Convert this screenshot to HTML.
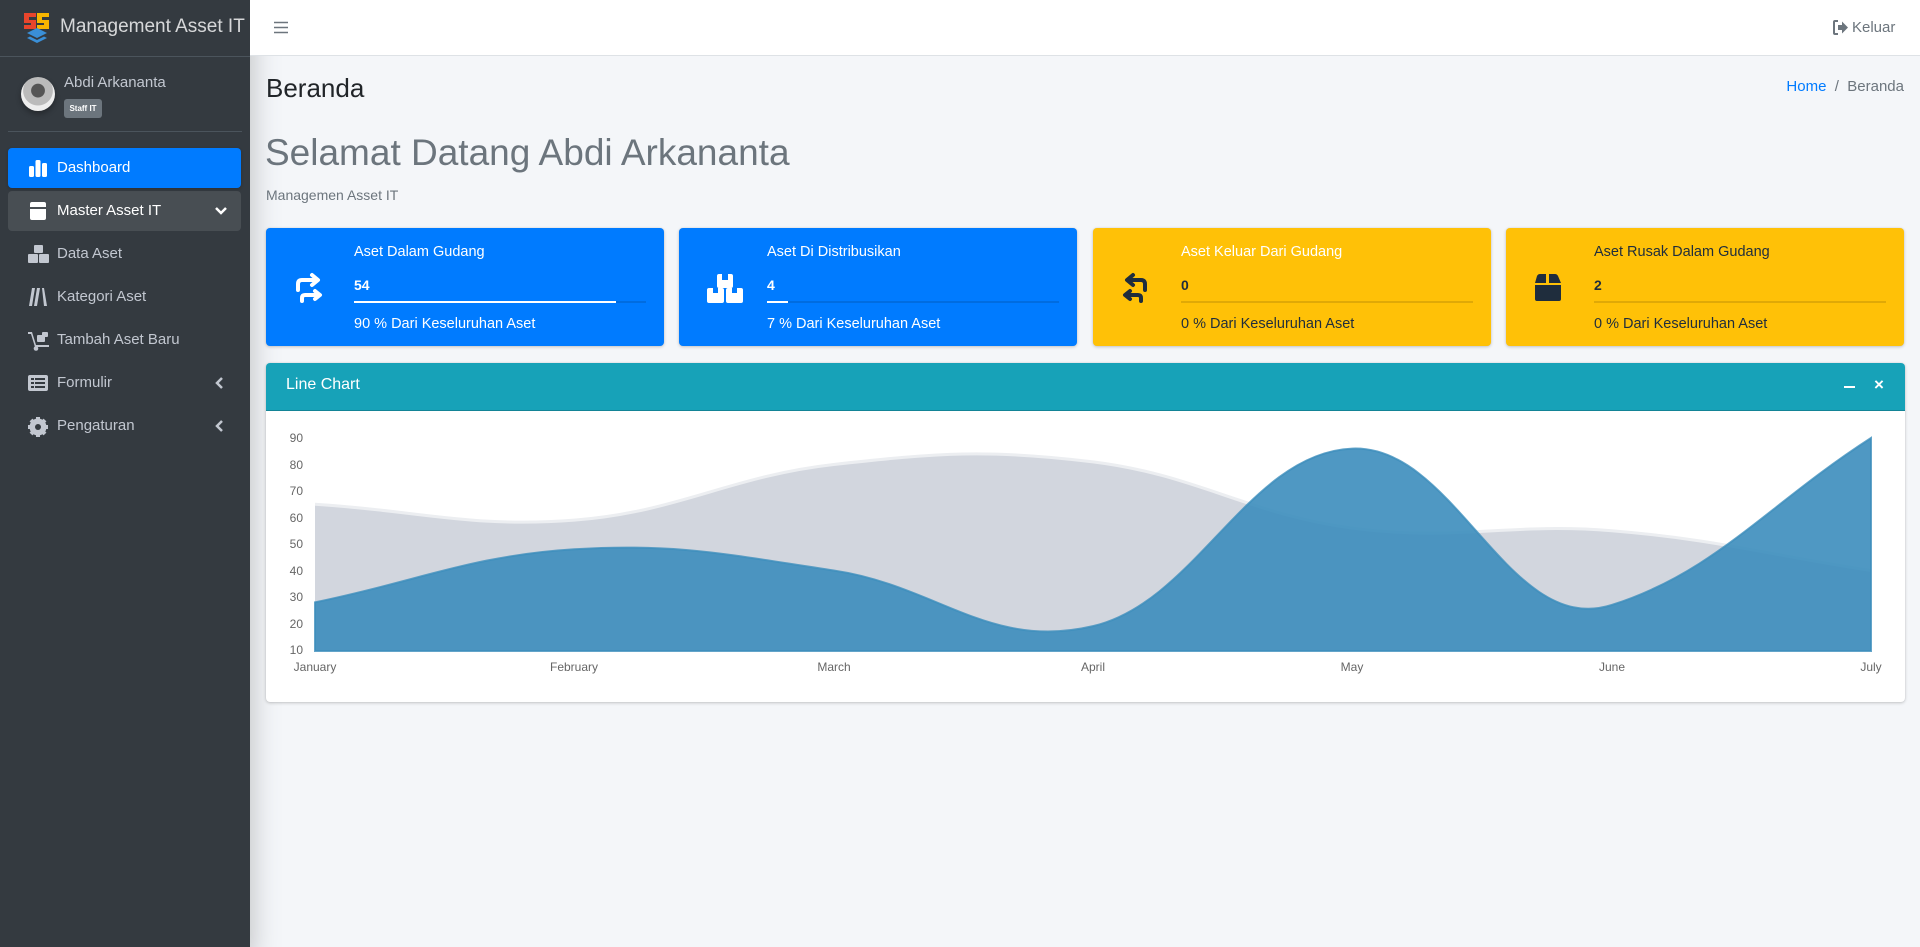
<!DOCTYPE html>
<html><head><meta charset="utf-8"><style>
*{box-sizing:border-box;margin:0;padding:0}
body{width:1920px;height:947px;overflow:hidden;background:#f4f6f9;font-family:"Liberation Sans",sans-serif;position:relative}
.a{position:absolute;white-space:nowrap}
#sb{left:0;top:0;width:250px;height:947px;background:#343a40;box-shadow:0 14px 28px rgba(0,0,0,.25)}
.nav{position:absolute;left:8px;width:233px;height:40px;border-radius:4px;color:#c2c7d0;font-size:15px;line-height:40px;padding-left:49px}
.nav svg{position:absolute;left:20px;top:11px}
.ib{position:absolute;top:228px;width:398px;height:118px;border-radius:4px;box-shadow:0 0 1px rgba(0,0,0,.125),0 1px 3px rgba(0,0,0,.2)}
.ib .t{position:absolute;left:88px;top:16px;font-size:14.5px}
.ib .n{position:absolute;left:88px;top:49px;font-size:14px;font-weight:bold}
.ib .p{position:absolute;left:88px;top:73px;width:292px;height:2px;background:rgba(0,0,0,.12)}
.ib .p i{display:block;height:2px}
.ib .d{position:absolute;left:88px;top:88px;font-size:14.5px}
.ib svg{position:absolute;left:28px;top:44px}
.yl{font-size:12px;color:#666;position:absolute;right:1617px;text-align:right}
.xl{font-size:12px;color:#666;position:absolute;top:660px;transform:translateX(-50%)}
</style></head><body>
<div id="sb" class="a">
 <svg class="a" style="left:21px;top:11px" width="30" height="32" viewBox="0 0 30 32"><path d="M3 2h12v4H8v3h7v9H3v-4h7v-2H3z" fill="#e8452c"/><path d="M16 2h12v4h-7v3h7v9H16v-4h7v-2h-7z" fill="#f7b500"/><path d="M6 22l10-5 10 5-10 5z" fill="#3a8fd8"/><path d="M6 27l10 5 10-5-3-1.5-7 3.5-7-3.5z" fill="#3a8fd8"/></svg>
 <div class="a" style="left:60px;top:16px;font-size:19px;color:rgba(255,255,255,.8);font-weight:300">Management Asset IT</div>
 <div class="a" style="left:0;top:56px;width:250px;height:1px;background:#4b545c"></div>
 <div class="a" style="left:21px;top:77px;width:34px;height:34px;border-radius:50%;background:radial-gradient(circle at 50% 40%,#555 0 25%,#bbb 27% 55%,#eee 57%);box-shadow:0 3px 6px rgba(0,0,0,.3)"></div>
 <div class="a" style="left:64px;top:74px;font-size:15px;color:#c2c7d0">Abdi Arkananta</div>
 <div class="a" style="left:64px;top:99px;width:38px;height:19px;background:#6c757d;border-radius:3px;color:#fff;font-size:8px;font-weight:bold;line-height:19px;text-align:center">Staff IT</div>
 <div class="a" style="left:8px;top:131px;width:234px;height:1px;background:#4b545c"></div>
 <div class="nav" style="top:148px;background:#007bff;color:#fff;box-shadow:0 1px 3px rgba(0,0,0,.2)"><svg width="20" height="18" viewBox="0 0 20 18" fill="#fff"><rect x="1" y="7" width="5" height="11" rx="1.5"/><rect x="7.5" y="1" width="5" height="17" rx="1.5"/><rect x="14" y="4" width="5" height="14" rx="1.5"/></svg>Dashboard</div>
 <div class="nav" style="top:191px;background:rgba(255,255,255,.1);color:#fff"><svg width="20" height="18" viewBox="0 0 20 18" fill="#fff"><path d="M2 2q0-2 2-2h12q2 0 2 2v3H2zM2 7h16v9q0 2-2 2H4q-2 0-2-2z"/></svg>Master Asset IT<svg style="left:206px;top:15px" width="14" height="10" viewBox="0 0 14 10"><path d="M2 2l5 5 5-5" stroke="#fff" stroke-width="2.5" fill="none"/></svg></div>
 <div class="nav" style="top:234px"><svg width="22" height="18" viewBox="0 0 22 18" fill="#c2c7d0"><rect x="6" y="0" width="9" height="8" rx="1"/><rect x="0" y="9" width="10" height="9" rx="1"/><rect x="11" y="9" width="10" height="9" rx="1"/></svg>Data Aset</div>
 <div class="nav" style="top:277px"><svg width="20" height="18" viewBox="0 0 20 18" fill="#c2c7d0"><path d="M4 0h3L4 18H1zM9 0h3L9 18H6zM14 0h2l3 18h-3z"/></svg>Kategori Aset</div>
 <div class="nav" style="top:320px"><svg width="22" height="20" viewBox="0 0 22 20" fill="#c2c7d0"><path d="M0 1h4l4 13h13v2H7L3 3H0z"/><circle cx="8" cy="17.5" r="2.3"/><rect x="9" y="4" width="8" height="7" rx="1"/><rect x="14" y="1" width="6" height="5" rx="1"/></svg>Tambah Aset Baru</div>
 <div class="nav" style="top:363px"><svg width="20" height="18" viewBox="0 0 20 18" fill="#c2c7d0"><path d="M2 1h16q2 0 2 2v12q0 2-2 2H2q-2 0-2-2V3q0-2 2-2z"/><g fill="#343a40"><rect x="3" y="4" width="3" height="2"/><rect x="3" y="8" width="3" height="2"/><rect x="3" y="12" width="3" height="2"/><rect x="7" y="4" width="10" height="2"/><rect x="7" y="8" width="10" height="2"/><rect x="7" y="12" width="10" height="2"/></g></svg>Formulir<svg style="left:207px;top:13px" width="10" height="14" viewBox="0 0 10 14"><path d="M7 2L2 7l5 5" stroke="#c2c7d0" stroke-width="2.5" fill="none"/></svg></div>
 <div class="nav" style="top:406px"><svg width="20" height="20" viewBox="0 0 20 20"><circle cx="10" cy="10" r="6" fill="none" stroke="#c2c7d0" stroke-width="5"/><g stroke="#c2c7d0" stroke-width="4"><path d="M10 0v20M0 10h20M3 3l14 14M17 3L3 17"/></g><circle cx="10" cy="10" r="3" fill="#343a40"/></svg>Pengaturan<svg style="left:207px;top:13px" width="10" height="14" viewBox="0 0 10 14"><path d="M7 2L2 7l5 5" stroke="#c2c7d0" stroke-width="2.5" fill="none"/></svg></div>
</div>

<div class="a" style="left:250px;top:0;width:1670px;height:56px;background:#fff;border-bottom:1px solid #dee2e6"></div>
<svg class="a" style="left:274px;top:21px" width="14" height="13" viewBox="0 0 14 13"><path d="M0 1.5h14M0 6.5h14M0 11.5h14" stroke="#6c757d" stroke-width="1.6"/></svg>
<svg class="a" style="left:1833px;top:20px" width="15" height="15" viewBox="0 0 15 15" fill="#6c757d"><path d="M0 2q0-2 2-2h3v2H2v11h3v2H2q-2 0-2-2z"/><path d="M5 5h4V1.5L15 7.5l-6 6V10H5z"/></svg>
<div class="a" style="left:1852px;top:19px;font-size:15px;color:#6c757d">Keluar</div>

<div class="a" style="left:266px;top:73px;font-size:26px;color:#212529">Beranda</div>
<div class="a" style="right:16px;top:78px;font-size:15px;color:#6c757d"><span style="color:#007bff">Home</span>&nbsp;&nbsp;/&nbsp;&nbsp;Beranda</div>
<div class="a" style="left:265px;top:132px;font-size:37px;color:#6c757d;font-weight:300">Selamat Datang Abdi Arkananta</div>
<div class="a" style="left:266px;top:187px;font-size:14px;color:#6c757d">Managemen Asset IT</div>

<div class="ib" style="left:266px;background:#007bff;color:#fff"><svg width="30" height="32" viewBox="0 0 30 32" fill="none" stroke="#fff" stroke-width="4" stroke-linecap="round"><path d="M4 18V12q0-4 4-4h14"/><path d="M18 3l6 5-6 5" stroke-linejoin="round"/><path d="M8 29v-3q0-3 3-3h14"/><path d="M21 19l5 4-5 4" stroke-linejoin="round"/></svg><div class="t">Aset Dalam Gudang</div><div class="n">54</div><div class="p"><i style="width:262px;background:#fff"></i></div><div class="d">90 % Dari Keseluruhan Aset</div></div>
<div class="ib" style="left:679px;background:#007bff;color:#fff"><svg width="36" height="32" viewBox="0 0 36 32" fill="#fff"><rect x="10" y="2" width="16" height="14" rx="2"/><rect x="0" y="16" width="17" height="15" rx="2"/><rect x="19" y="16" width="17" height="15" rx="2"/><g fill="#007bff"><rect x="15" y="2" width="6" height="6"/><rect x="6" y="16" width="5" height="5"/><rect x="25" y="16" width="5" height="5"/></g></svg><div class="t">Aset Di Distribusikan</div><div class="n">4</div><div class="p"><i style="width:21px;background:#fff"></i></div><div class="d">7 % Dari Keseluruhan Aset</div></div>
<div class="ib" style="left:1093px;background:#ffc107;color:#1f2d3d"><svg width="30" height="32" viewBox="0 0 30 32" fill="none" stroke="#1f2d3d" stroke-width="4" stroke-linecap="round"><path d="M24 18V12q0-4-4-4H8"/><path d="M12 3L6 8l6 5" stroke-linejoin="round"/><path d="M20 29v-3q0-3-3-3H5"/><path d="M9 19l-5 4 5 4" stroke-linejoin="round"/></svg><div class="t" style="color:#fff">Aset Keluar Dari Gudang</div><div class="n">0</div><div class="p"><i></i></div><div class="d">0 % Dari Keseluruhan Aset</div></div>
<div class="ib" style="left:1506px;background:#ffc107;color:#1f2d3d"><svg width="28" height="32" viewBox="0 0 28 32" fill="#1f2d3d"><path d="M1 11l2-7q1-2 3-2h6v9zM15 2h6q2 0 3 2l3 7H15zM1 13h26v14q0 2-2 2H3q-2 0-2-2z"/></svg><div class="t">Aset Rusak Dalam Gudang</div><div class="n">2</div><div class="p"><i></i></div><div class="d">0 % Dari Keseluruhan Aset</div></div>

<div class="a" style="left:266px;top:363px;width:1639px;height:339px;background:#fff;border-radius:4px;box-shadow:0 0 1px rgba(0,0,0,.125),0 1px 3px rgba(0,0,0,.2)"></div>
<div class="a" style="left:266px;top:363px;width:1639px;height:48px;background:#17a2b8;border-radius:4px 4px 0 0;border-bottom:1px solid #138496"></div>
<div class="a" style="left:286px;top:376px;font-size:16px;color:#fff">Line Chart</div>
<div class="a" style="left:1844px;top:386px;width:11px;height:2px;background:#fff"></div>
<div class="a" style="left:1874px;top:375px;font-size:17px;color:#fff;font-weight:bold">×</div>

<svg class="a" style="left:0;top:0" width="1920" height="947">
<path d="M315,504.25 C418.7,510.6 470.6,528.1 574.3,520.15 C678,512.2 730,476.2 833.7,464.5 C937.4,452.8 989.3,449.1 1093,461.85 C1196.7,474.6 1248.6,514.3 1352.3,528.1 C1456,541.9 1508,522.3 1611.7,530.75 C1715.4,539.2 1767.3,554.6 1871,570.5 L1871,651 L315,651 Z" fill="#d2d6de"/>
<path d="M315,504.25 C418.7,510.6 470.6,528.1 574.3,520.15 C678,512.2 730,476.2 833.7,464.5 C937.4,452.8 989.3,449.1 1093,461.85 C1196.7,474.6 1248.6,514.3 1352.3,528.1 C1456,541.9 1508,522.3 1611.7,530.75 C1715.4,539.2 1767.3,554.6 1871,570.5" fill="none" stroke="#eceef1" stroke-width="3"/>
<path d="M315,602.3 C418.7,581.1 470.6,555.7 574.3,549.3 C678,542.9 730,555.1 833.7,570.5 C937.4,585.9 989.3,650.5 1093,626.15 C1196.7,601.8 1248.6,452.8 1352.3,448.6 C1456,444.4 1508,637.9 1611.7,605 C1715.4,572.1 1767.3,504.8 1871,438 L1871,651 L315,651 Z" fill="rgb(60,141,188)" fill-opacity="0.9" stroke="rgb(60,141,188)" stroke-opacity="0.8" stroke-width="2"/>
</svg>
<div class="yl" style="top:431px">90</div><div class="yl" style="top:458px">80</div><div class="yl" style="top:484px">70</div><div class="yl" style="top:511px">60</div><div class="yl" style="top:537px">50</div><div class="yl" style="top:564px">40</div><div class="yl" style="top:590px">30</div><div class="yl" style="top:617px">20</div><div class="yl" style="top:643px">10</div>
<div class="xl" style="left:315px">January</div><div class="xl" style="left:574px">February</div><div class="xl" style="left:834px">March</div><div class="xl" style="left:1093px">April</div><div class="xl" style="left:1352px">May</div><div class="xl" style="left:1612px">June</div><div class="xl" style="left:1871px">July</div>
</body></html>
